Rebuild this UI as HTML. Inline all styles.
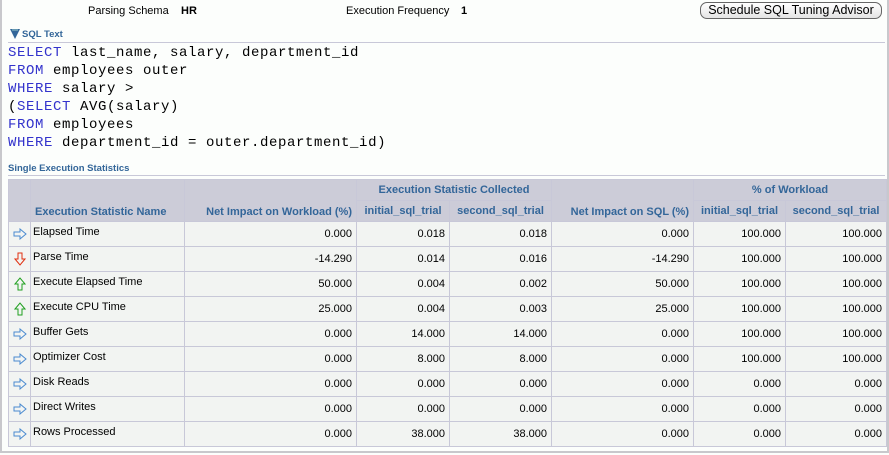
<!DOCTYPE html><html><head><style>
body{margin:0;width:889px;height:455px;background:#fcfefc;font-family:"Liberation Sans",sans-serif;font-size:11px;color:#000;position:relative;overflow:hidden}
.frame{position:absolute;left:0;top:0;width:885px;height:451px;border:2px solid #c8c8cc;border-top:none}
.a{position:absolute}
.btn{position:absolute;left:700px;top:2px;width:180px;height:15px;border:1px solid #666;border-radius:7px;background:linear-gradient(#fff,#e4e4e4);font-size:12.5px;text-align:center;line-height:15px}
.hr{position:absolute;left:8px;width:877px;height:1px;background:#c8c8d8}
.sec{color:#336699;font-weight:bold;font-size:9.5px}
pre{position:absolute;left:8px;top:44px;margin:0;font-family:"Liberation Mono",monospace;font-size:14px;letter-spacing:0.6px;line-height:18px}
pre b{font-weight:normal;color:#3333cc}
table{position:absolute;left:8px;top:179px;border-collapse:collapse;table-layout:fixed;width:878px}
td,th{border:1px solid #c8c8d8;padding:0 4px;white-space:nowrap;overflow:hidden}
th{background:#ccccd8;color:#336699;font-size:11px;font-weight:bold;height:20px}
td{background:#f2f4f2;height:24px;text-align:right;padding-top:0;padding-bottom:0}
td.n{text-align:left;padding-left:2px;vertical-align:top;padding-top:4px;height:20px}
td.i{padding:0;text-align:center}
svg{display:block;margin:auto}
</style></head><body>
<div class="frame"></div>
<div class="a" style="left:88px;top:5px">Parsing Schema</div>
<div class="a" style="left:181px;top:5px;font-weight:bold">HR</div>
<div class="a" style="left:346px;top:5px">Execution Frequency</div>
<div class="a" style="left:461px;top:5px;font-weight:bold">1</div>
<div class="btn">Schedule SQL Tuning Advisor</div>
<svg class="a" style="left:9px;top:28px" width="12" height="12"><path d="M1 1H11L6 11Z" fill="#336699"/><path d="M3 2H9" stroke="#9cc" stroke-width="1"/></svg>
<div class="a sec" style="left:22px;top:29px">SQL Text</div>
<div class="hr" style="top:42px"></div>
<pre><b>SELECT</b> last_name, salary, department_id
<b>FROM</b> employees outer
<b>WHERE</b> salary &gt;
(<b>SELECT</b> AVG(salary)
<b>FROM</b> employees
<b>WHERE</b> department_id = outer.department_id)</pre>
<div class="a sec" style="left:8px;top:163px">Single Execution Statistics</div>
<div class="hr" style="top:175px"></div>
<table>
<colgroup><col style="width:22px"><col style="width:154px"><col style="width:172px"><col style="width:93px"><col style="width:102px"><col style="width:142px"><col style="width:92px"><col style="width:101px"></colgroup>
<tr><th rowspan="2"></th><th rowspan="2" style="text-align:left;vertical-align:bottom;padding-bottom:3px">Execution Statistic Name</th><th rowspan="2" style="text-align:right;vertical-align:bottom;padding-bottom:3px">Net Impact on Workload (%)</th><th colspan="2">Execution Statistic Collected</th><th rowspan="2" style="text-align:right;vertical-align:bottom;padding-bottom:3px">Net Impact on SQL (%)</th><th colspan="2">% of Workload</th></tr>
<tr><th>initial_sql_trial</th><th>second_sql_trial</th><th>initial_sql_trial</th><th>second_sql_trial</th></tr>
<tr><td class="i"><svg width="14" height="12"><path d="M1 4H7V1L13 6L7 11V8H1Z" fill="none" stroke="#4a8ad0"/></svg></td><td class="n">Elapsed Time</td><td>0.000</td><td>0.018</td><td>0.018</td><td>0.000</td><td>100.000</td><td>100.000</td></tr>
<tr><td class="i"><svg width="12" height="14"><path d="M4 1H8V7H11L6 13L1 7H4Z" fill="none" stroke="#e03010"/></svg></td><td class="n">Parse Time</td><td>-14.290</td><td>0.014</td><td>0.016</td><td>-14.290</td><td>100.000</td><td>100.000</td></tr>
<tr><td class="i"><svg width="12" height="14"><path d="M4 13H8V7H11L6 1L1 7H4Z" fill="none" stroke="#20a020"/></svg></td><td class="n">Execute Elapsed Time</td><td>50.000</td><td>0.004</td><td>0.002</td><td>50.000</td><td>100.000</td><td>100.000</td></tr>
<tr><td class="i"><svg width="12" height="14"><path d="M4 13H8V7H11L6 1L1 7H4Z" fill="none" stroke="#20a020"/></svg></td><td class="n">Execute CPU Time</td><td>25.000</td><td>0.004</td><td>0.003</td><td>25.000</td><td>100.000</td><td>100.000</td></tr>
<tr><td class="i"><svg width="14" height="12"><path d="M1 4H7V1L13 6L7 11V8H1Z" fill="none" stroke="#4a8ad0"/></svg></td><td class="n">Buffer Gets</td><td>0.000</td><td>14.000</td><td>14.000</td><td>0.000</td><td>100.000</td><td>100.000</td></tr>
<tr><td class="i"><svg width="14" height="12"><path d="M1 4H7V1L13 6L7 11V8H1Z" fill="none" stroke="#4a8ad0"/></svg></td><td class="n">Optimizer Cost</td><td>0.000</td><td>8.000</td><td>8.000</td><td>0.000</td><td>100.000</td><td>100.000</td></tr>
<tr><td class="i"><svg width="14" height="12"><path d="M1 4H7V1L13 6L7 11V8H1Z" fill="none" stroke="#4a8ad0"/></svg></td><td class="n">Disk Reads</td><td>0.000</td><td>0.000</td><td>0.000</td><td>0.000</td><td>0.000</td><td>0.000</td></tr>
<tr><td class="i"><svg width="14" height="12"><path d="M1 4H7V1L13 6L7 11V8H1Z" fill="none" stroke="#4a8ad0"/></svg></td><td class="n">Direct Writes</td><td>0.000</td><td>0.000</td><td>0.000</td><td>0.000</td><td>0.000</td><td>0.000</td></tr>
<tr><td class="i"><svg width="14" height="12"><path d="M1 4H7V1L13 6L7 11V8H1Z" fill="none" stroke="#4a8ad0"/></svg></td><td class="n">Rows Processed</td><td>0.000</td><td>38.000</td><td>38.000</td><td>0.000</td><td>0.000</td><td>0.000</td></tr>
</table>
</body></html>
